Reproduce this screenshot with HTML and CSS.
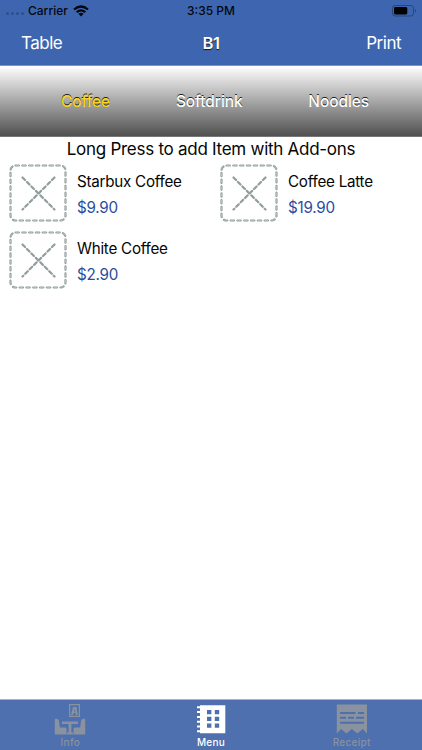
FILE: index.html
```html
<!DOCTYPE html>
<html lang="en">
<head>
<meta charset="utf-8">
<title>Menu</title>
<link rel="stylesheet" href="styles.css">
</head>
<body>
<svg class="defs" width="0" height="0" aria-hidden="true">
  <symbol id="placeholder" viewBox="0 0 58 58">
    <g fill="none" stroke="#929d9d" stroke-linecap="round" stroke-width="2.2">
      <rect x="1.5" y="1.5" width="55" height="55" rx="5" stroke-dasharray="3.4 3.4"/>
      <path d="M13.5 13.5l32 32M45.5 13.5l-32 32" stroke-dasharray="3.6 2.7"/>
    </g>
    <rect x="1.5" y="1.5" width="55" height="55" rx="5" fill="none" stroke="#b7c3c3" stroke-width=".8" stroke-dasharray="3.4 3.4"/>
  </symbol>
</svg>
<header class="top">
  <div class="status">
    <div class="carrier">
      <span class="dots"><i></i><i></i><i></i><i></i></span>
      <span class="carrier-name">Carrier</span>
      <svg class="wifi" width="16" height="12" viewBox="0 0 16 12"><g fill="none" stroke="#05070d" stroke-width="2.2"><path d="M1 4.500Q8-1.500 15 4.500"/><path d="M3.700 7.200Q8 3.600 12.300 7.200"/></g><path fill="#05070d" d="M5.400 8.800Q8 6.900 10.600 8.800L8 11.600z"/></svg>
    </div>
    <div class="time">3:35 PM</div>
    <svg class="battery" width="25" height="12" viewBox="0 0 25 12"><rect x=".5" y=".5" width="21" height="10.500" rx="2.800" fill="none" stroke="#294477"/><rect x="2" y="2" width="13.300" height="7.500" rx="1.400" fill="#000"/><path d="M23 4v3.600q1.300-.5 1.300-1.800T23 4" fill="#294477"/></svg>
  </div>
  <nav class="bar">
    <span class="table">Table</span>
    <span class="title">B1</span>
    <span class="print">Print</span>
  </nav>
</header>
<div class="tabs">
  <span class="tab active">Coffee</span>
  <span class="tab soft">Softdrink</span>
  <span class="tab noodles">Noodles</span>
</div>
<main>
  <p class="hint">Long Press to add Item with Add-ons</p>
  <div class="grid">
    <div class="item"><svg class="thumb"><use href="#placeholder"/></svg><div class="info"><div class="name">Starbux Coffee</div><div class="price">$9.90</div></div></div>
    <div class="item"><svg class="thumb"><use href="#placeholder"/></svg><div class="info"><div class="name">Coffee Latte</div><div class="price">$19.90</div></div></div>
    <div class="item"><svg class="thumb"><use href="#placeholder"/></svg><div class="info"><div class="name">White Coffee</div><div class="price">$2.90</div></div></div>
  </div>
</main>
<footer class="bottom">
  <div class="nav">
    <svg width="32" height="32" viewBox="0 0 32 32"><g fill="#8a929f"><path fill-rule="evenodd" d="M15 0h11v13H15zM16.200 1.200v10.600h8.600V1.200z"/><path d="M17 11l2-8h3.500l1.300 8h-2l-.3-2h-1.800l-.7 2zM20 7.500h1.300L21 4.800z"/><path d="M.800 15q3.600-1 4.200 2l.8 6.500H11q1.500 0 1.500 1.500v5.500H.8zM31.200 15q-3.600-1-4.200 2l-.8 6.500H21q-1.500 0-1.500 1.500v5.500h11.700z"/><path d="M8 17.500h16v2.500h-6.600v8.500H19v2h-6v-2h1.600V20H8z"/></g></svg>
    <span>Info</span>
  </div>
  <div class="nav selected">
    <svg width="32" height="32" viewBox="0 0 32 32"><path fill="#fff" fill-rule="evenodd" d="M5 1.300h25.300v28H5v-1H2v-2h3v-2.800H2v-2h3v-2.800H2v-2h3v-2.800H2v-2h3V9.100H2v-2h3V4.300H2v-2h3zM12 6v4.200h4.400V6zm7.800 0v4.200h4.400V6zM12 12.800v4.200h4.400v-4.200zm7.800 0v4.200h4.400v-4.200zM12 19.600v4.200h4.400v-4.200zm7.800 0v4.200h4.400v-4.200z"/></svg>
    <span>Menu</span>
  </div>
  <div class="nav">
    <svg width="32" height="32" viewBox="0 0 32 32"><path fill="#8a929f" d="M.800 .500H31v29l-4.300-4.500-5.400 4.500-5.400-4.500-5.400 4.500-5.400-4.500L.8 29.500z"/><path stroke="#4e70ae" stroke-width="2" d="M4 9h15.500M22 9h6M4 13.800h6M12 13.800h6M20 13.800h8M4 18.800h24" fill="none"/></svg>
    <span>Receipt</span>
  </div>
</footer>
</body>
</html>
```
FILE: styles.css
```css
* { box-sizing: border-box; }
body {
  margin: 0;
  height: 750px;
  display: flex;
  flex-direction: column;
  overflow: hidden;
  background: #fff;
  color: #050505;
  font-family: Inter, "Liberation Sans", sans-serif;
}
.defs { position: absolute; }
.top { height: 66px; background: #3e66b0; border-bottom: 1px solid #7e94bd; }
.status {
  height: 21px;
  display: grid;
  grid-template-columns: 1fr auto 1fr;
  align-items: center;
  padding: 0 5px 0 6px;
  font-size: 12px;
  font-weight: 500;
  color: #05070d;
}
.carrier { display: flex; align-items: center; }
.dots { display: flex; gap: 2px; width: 22px; padding-top: 5px; }
.dots i { width: 3px; height: 3px; border-radius: 50%; background: #2d4f90; }
.wifi { margin-left: 5px; }
.time { margin-left: -1px; }
.battery { justify-self: end; }
.bar {
  height: 44px;
  display: grid;
  grid-template-columns: 1fr auto 1fr;
  align-items: center;
  padding: 0 21px;
  color: #fff;
  font-size: 17px;
  letter-spacing: -.5px;
}
.title { font-weight: 600; font-size: 16.5px; text-shadow: 0 1px 1px #111; }
.print { text-align: right; }
.tabs {
  height: 71px;
  display: flex;
  justify-content: space-between;
  align-items: center;
  padding: 0 53px 0 61px;
  background: linear-gradient(#fff, #505050);
  border-bottom: 1px solid #777;
  font-size: 15.5px;
  font-weight: 500;
  letter-spacing: -.1px;
}
.tab { color: #fff; text-shadow: 0 -1px 0 #222; }
.active { color: #fbd71c; }
main { flex: 1; }
.hint { margin: 0; height: 25px; line-height: 25px; text-align: center; font-size: 17px; letter-spacing: -.27px; }
.grid { display: grid; grid-template-columns: 211px 211px; grid-auto-rows: 67px; padding-top: 2px; }
.item { display: flex; padding-left: 9px; }
.thumb { width: 58px; height: 58px; }
.info { padding: 7px 0 0 10px; font-size: 15.2px; line-height: 22px; white-space: nowrap; letter-spacing: -.25px; }
.price { margin-top: 4px; color: #2b4c9e; }
.bottom {
  height: 51px;
  display: grid;
  grid-template-columns: 1fr 1fr 1fr;
  background: #4e70ae;
  border-top: 1px solid #a5b3c9;
}
.nav {
  display: flex;
  flex-direction: column;
  align-items: center;
  padding-top: 4px;
  color: #8a929f;
  font-size: 10px;
  font-weight: 500;
  line-height: 12px;
  letter-spacing: .3px;
}
.selected { color: #fff; }
```
